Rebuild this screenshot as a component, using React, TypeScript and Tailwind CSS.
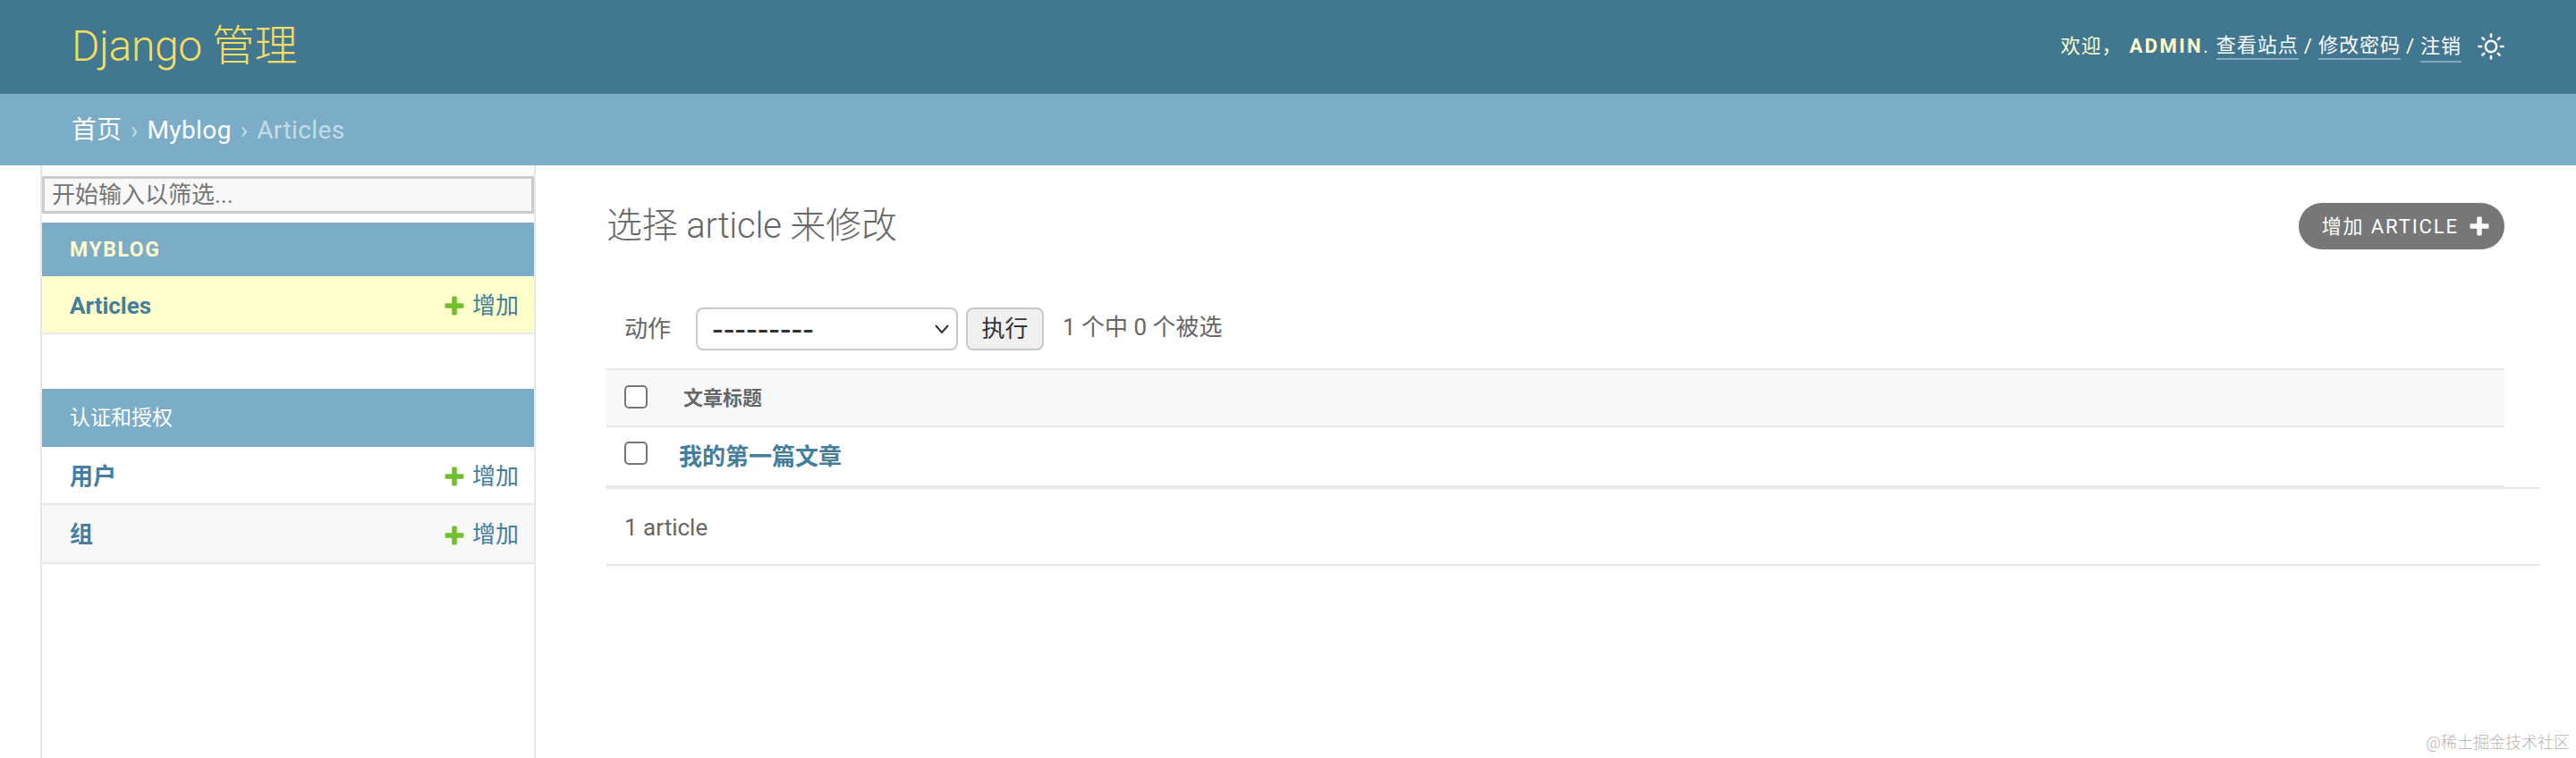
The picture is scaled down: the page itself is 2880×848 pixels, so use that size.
const FONT = '[font-family:Roboto,"Noto_Sans_CJK_SC",sans-serif]';

function Sun() {
  return (
    <svg viewBox="0 0 30 30" className="w-[30px] h-[30px] ml-[18px] shrink-0" fill="none" stroke="#ffffff" strokeWidth="2.6" strokeLinecap="round">
      <circle cx="15" cy="15" r="6.2" />
      <path d="M15 1.5v2.5M15 26v2.5M1.5 15h2.5M26 15h2.5M5.5 5.5l1.7 1.7M22.8 22.8l1.7 1.7M5.5 24.5l1.7-1.7M22.8 7.2l1.7-1.7" />
    </svg>
  );
}

function Plus({ color, size }: { color: string; size: number }) {
  return (
    <svg viewBox="0 0 20 20" width={size} height={size} className="shrink-0">
      <path d="M7.5 1.5a1 1 0 0 1 1-1h3a1 1 0 0 1 1 1v6h6a1 1 0 0 1 1 1v3a1 1 0 0 1-1 1h-6v6a1 1 0 0 1-1 1h-3a1 1 0 0 1-1-1v-6h-6a1 1 0 0 1-1-1v-3a1 1 0 0 1 1-1h6z" fill={color} />
    </svg>
  );
}

function ModelRow({ name, className }: { name: string; className: string }) {
  return (
    <div className={`flex items-center justify-between pl-[31px] pr-[17px] pt-[3px] border-b-2 border-[#e8e8e8] ${className}`}>
      <span className="text-[26px] font-bold text-[#447e9b]">{name}</span>
      <span className="flex items-center gap-[9px] text-[26px] text-[#447e9b]">
        <Plus color="#70bf2b" size={22} />
        增加
      </span>
    </div>
  );
}

function Checkbox() {
  return <span className="block w-[26px] h-[26px] rounded-[5px] border-2 border-[#767676] bg-white" />;
}

export default function App() {
  return (
    <div className={`${FONT} relative flex flex-col h-[848px] w-[2880px] overflow-hidden bg-white text-[#333]`}>
      <header className="flex items-center justify-between h-[105px] bg-[#427792] pl-[80px] pr-[80px] shrink-0">
        <div className="text-[48px] font-light text-[#f5dd5d] leading-none -mt-[2px] tracking-[-0.4px]">Django 管理</div>
        <div className="flex items-center text-[22px] text-[#ffffcc] tracking-[1px] -mt-[2px]">
          <span>欢迎，</span>
          <strong className="ml-[8px] font-bold tracking-[2.4px] text-[#ffffcc]">ADMIN</strong>
          <span>.</span>
          <a className="ml-[8px] text-white border-b-2 border-[#87a8ba] leading-[28px]">查看站点</a>
          <span className="mx-[6px]">/</span>
          <a className="text-white border-b-2 border-[#87a8ba] leading-[28px]">修改密码</a>
          <span className="mx-[6px]">/</span>
          <a className="text-white border-b-2 border-[#87a8ba] leading-[32px] mt-[2px]">注销</a>
          <Sun />
        </div>
      </header>

      <nav className="flex items-center h-[80px] bg-[#7cadc8] pl-[80px] pt-[1px] text-[28px] text-[#c4dce8] shrink-0">
        <a className="text-white">首页</a>
        <span className="mx-[10px]">›</span>
        <a className="text-white tracking-[0.4px]">Myblog</a>
        <span className="mx-[10px]">›</span>
        <span className="tracking-[0.4px]">Articles</span>
      </nav>

      <div className="flex flex-1 min-h-0">
        <aside className="flex flex-col w-[554px] ml-[45px] shrink-0 border-x-2 border-[#e8e8e8] pt-[12px]">
          <div className="flex items-center h-[42px] border-[3px] border-[#cccccc] bg-[#f8f8f8] pl-[8px] text-[26px] text-[#757575] shrink-0">
            开始输入以筛选...
          </div>
          <div className="flex items-center h-[60px] mt-[10px] pl-[31px] pt-[2px] bg-[#7cadc8] text-[23px] font-bold tracking-[1.6px] text-[#ffffcc] shrink-0">
            MYBLOG
          </div>
          <ModelRow name="Articles" className="h-[65px] bg-[#ffffcc] shrink-0" />
          <div className="flex items-center h-[65px] mt-[61px] pl-[31px] pt-[2px] bg-[#7cadc8] text-[23px] text-white shrink-0">
            认证和授权
          </div>
          <ModelRow name="用户" className="h-[65px] bg-white shrink-0" />
          <ModelRow name="组" className="h-[66px] bg-[#f8f8f8] shrink-0" />
        </aside>

        <main className="flex-1 min-w-0 pl-[79px] pr-[40px] pt-[42px]">
          <div className="flex items-center justify-between h-[52px] pr-[40px]">
            <h1 className="text-[40px] font-light text-[#666] leading-none tracking-[-0.2px]">选择 article 来修改</h1>
            <a className="flex items-center gap-[12px] h-[52px] pl-[26px] pr-[17px] rounded-full bg-[#777777] text-[22px] tracking-[1.9px] text-white">
              增加 ARTICLE
              <Plus color="#ffffff" size={22} />
            </a>
          </div>

          <div className="flex items-center h-[48px] mt-[65px] pl-[20px] text-[26px] text-[#666]">
            <span>动作</span>
            <span className="flex items-center justify-between w-[293px] h-[48px] ml-[28px] pl-[16px] pr-[8px] rounded-[8px] border-2 border-[#c8c8c8] bg-white text-[#333]">
              <span className="text-[38px] leading-none [font-family:'Liberation_Sans',sans-serif]">---------</span>
              <svg viewBox="0 0 16 10" className="w-[16px] h-[10px]" fill="none" stroke="#333" strokeWidth="2">
                <path d="M1 1l7 8 7-8" />
              </svg>
            </span>
            <span className="flex items-center justify-center w-[87px] h-[48px] ml-[9px] rounded-[8px] border-2 border-[#c8c8c8] bg-[#f0f0f0] text-[#333] text-[26px]">
              执行
            </span>
            <span className="ml-[21px] text-[26px] -mt-[4px]">1 个中 0 个被选</span>
          </div>

          <div className="flex items-center h-[66px] mt-[20px] mr-[40px] pl-[20px] bg-[#f8f8f8] border-y-2 border-[#e8e8e8]">
            <span className="-mt-[3px]"><Checkbox /></span>
            <span className="ml-[40px] text-[22px] font-bold text-[#666]">文章标题</span>
          </div>
          <div className="border-b-2 border-[#e8e8e8]">
            <div className="flex items-center h-[67px] mr-[40px] pl-[20px] border-b-2 border-[#e8e8e8]">
              <span className="-mt-[7px]"><Checkbox /></span>
              <span className="ml-[35px] mt-[2px] text-[26px] font-bold text-[#447e9b]">我的第一篇文章</span>
            </div>
          </div>
          <div className="flex items-center h-[86px] pl-[20px] pt-[2px] border-b-2 border-[#e8e8e8] text-[26px] text-[#666]">
            1 article
          </div>
        </main>
      </div>

      <span className="absolute right-[7px] bottom-[4px] text-[18px] font-light text-[#b5b5b5]">@稀土掘金技术社区</span>
    </div>
  );
}
